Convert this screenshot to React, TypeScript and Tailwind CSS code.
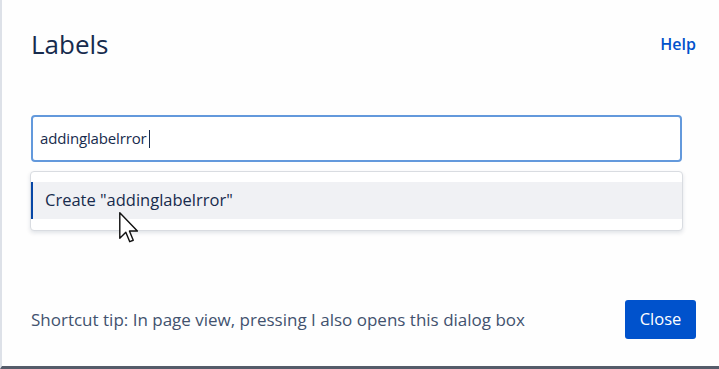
import React from 'react'

function Pointer() {
  return (
    <svg
      className="pointer-events-none absolute left-[117px] top-[212px]"
      width="19"
      height="31"
      viewBox="0 0 12 19.5"
    >
      <path
        d="M0.5 0.5 L0.5 16.5 L4.3 12.8 L6.8 18.7 L9 17.8 L6.6 12 L11.6 12 Z"
        fill="#ffffff"
        stroke="#111111"
        strokeWidth="0.9"
        strokeLinejoin="round"
      />
    </svg>
  )
}

export default function App() {
  const query = 'addinglabelrror'

  return (
    <div className="relative flex h-[369px] w-[719px] flex-col border-b-[3px] border-l-2 border-b-[#555c6a] border-l-[#dde1e8] bg-[#fefefe] pl-[29px] pr-[23px] font-['Open_Sans','Noto_Sans',sans-serif] text-[#172b4d]">
      <div className="mt-[24px] flex h-[40px] items-center justify-between">
        <h1 className="text-[26px] font-normal leading-none">Labels</h1>
        <a href="#" className="text-[16px] font-semibold text-[#0052cc]">
          Help
        </a>
      </div>

      <div className="mr-[14px] mt-[51px] flex h-[47px] items-center rounded-[4px] border-2 border-[#6399dc] bg-white px-[7px]">
        <span className="text-[15px] tracking-[-0.15px] text-[#172b4d]">{query}</span>
        <span className="ml-[2px] h-[18px] w-px bg-[#172b4d]" />
      </div>

      <div className="mr-[13px] ml-[-1px] mt-[9px] rounded-[4px] border border-[#d9dce1] bg-white pb-[11px] pt-[10px] shadow-[0_2px_4px_rgba(9,30,66,0.12)]">
        <div className="flex h-[37px] items-center border-l-2 border-l-[#0747a6] bg-[#f0f1f4] pl-[12px]">
          <span className="text-[16.5px] text-[#172b4d]">Create "{query}"</span>
        </div>
      </div>

      <div className="flex-1" />

      <div className="mb-[27px] flex items-center justify-between">
        <p className="text-[17px] text-[#42526e]">
          Shortcut tip: In page view, pressing I also opens this dialog box
        </p>
        <button className="h-[39px] w-[71px] rounded-[3px] bg-[#0052cc] text-[16.5px] font-normal text-white">
          Close
        </button>
      </div>

      <Pointer />
    </div>
  )
}
